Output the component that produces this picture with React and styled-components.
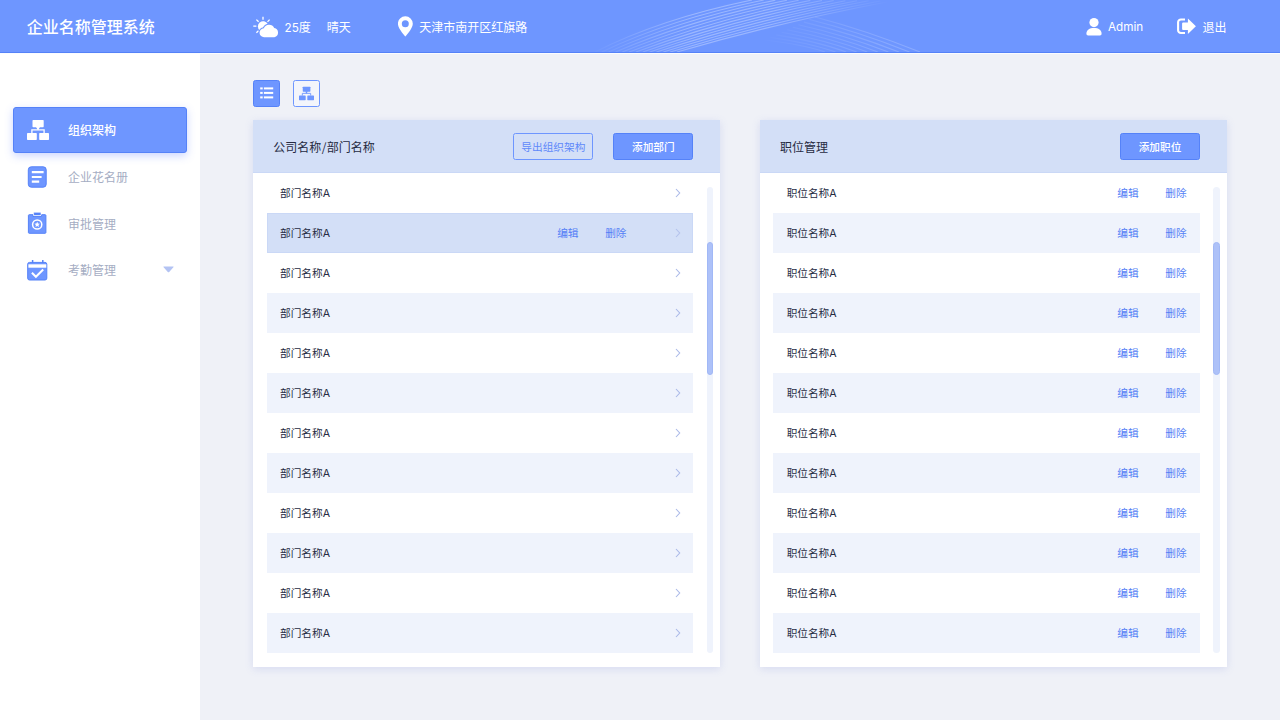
import React from 'react';
import styled, { createGlobalStyle, css } from 'styled-components';

const blue = '#6e96ff';
const deep = '#5582f8';

const GlobalStyle = createGlobalStyle`
  * { box-sizing: border-box; }
  body {
    margin: 0;
    background: #eff1f7;
    font-family: "Noto Sans CJK SC", "Noto Sans", sans-serif;
    color: #262b42;
  }
  button { font-family: inherit; }
`;

const Page = styled.div`
  width: 1280px;
  height: 720px;
  display: flex;
  flex-direction: column;
  overflow: hidden;
`;

const Header = styled.header`
  position: relative;
  flex: none;
  height: 53px;
  display: flex;
  align-items: center;
  padding-top: 2px;
  background: ${blue};
  border-bottom: 1px solid ${deep};
  box-shadow: 0 1px 0 #fbfcff;
  color: #fff;
  font-size: 12px;
  line-height: 18px;
  z-index: 1;
`;

const Waves = styled.svg`
  position: absolute;
  left: 590px;
  top: 0;
`;

const Title = styled.h1`
  margin: 0 0 2px;
  padding-left: 26.7px;
  width: 252.5px;
  font-size: 16px;
  line-height: 24px;
  font-weight: 500;
`;

const HeaderItem = styled.div`
  display: flex;
  align-items: center;
  width: ${(p) => p.$width}px;
  gap: ${(p) => p.$gap}px;
  white-space: nowrap;

  svg {
    margin-bottom: 1px;
  }
`;

const Spacer = styled.div`
  flex: 1;
`;

const Body = styled.div`
  flex: 1;
  display: flex;
`;

const Sidebar = styled.nav`
  flex: none;
  width: 200px;
  padding: 53.67px 13.33px 0;
  background: #fff;
`;

const NavItem = styled.a`
  display: flex;
  align-items: center;
  height: 46.67px;
  padding: 0 12.5px 0 13.3px;
  border-radius: 3px;
  font-size: 12px;
  color: #a5adc3;
  ${(p) =>
    p.$active &&
    css`
      background: ${blue};
      border: 1px solid ${deep};
      padding: 0 11.5px 0 12.3px;
      color: #fff;
      font-weight: 500;
      box-shadow: 0 3px 8px rgba(85, 120, 255, 0.3);
    `}
`;

const NavIcon = styled.span`
  display: flex;
  width: 41.4px;
`;

const NavLabel = styled.span`
  flex: 1;
`;

const Main = styled.main`
  flex: 1;
  padding: 27px 53.33px 0;
`;

const Toggles = styled.div`
  display: flex;
  gap: 13.33px;
  margin-bottom: 13.33px;
`;

const Toggle = styled.button`
  display: flex;
  align-items: center;
  justify-content: center;
  width: 26.67px;
  height: 26.67px;
  padding: 0;
  border: 1px solid ${(p) => (p.$active ? deep : blue)};
  border-radius: 2.5px;
  background: ${(p) => (p.$active ? blue : '#f3f5fb')};
`;

const Panels = styled.div`
  display: flex;
  gap: 40px;
`;

const Panel = styled.section`
  width: 466.67px;
  height: 546.67px;
  background: #fff;
  box-shadow: 0 2px 8px rgba(120, 135, 220, 0.2);
`;

const PanelHead = styled.div`
  display: flex;
  align-items: center;
  gap: 20px;
  height: 53.33px;
  padding: 0 26.67px 0 20px;
  background: #d3dff7;
  box-shadow: inset 0 -1px 0 #cad8f6;
`;

const PanelTitle = styled.h2`
  flex: 1;
  margin: 0;
  font-size: 12px;
  font-weight: 400;
`;

const Button = styled.button`
  width: 80px;
  height: 26.67px;
  padding: 1px 0 0;
  border: 1px solid ${(p) => (p.$outline ? blue : deep)};
  border-radius: 2.5px;
  background: ${(p) => (p.$outline ? 'transparent' : blue)};
  color: ${(p) => (p.$outline ? '#5f89fa' : '#fff')};
  font-size: 10.67px;
  line-height: 16px;
  font-weight: ${(p) => (p.$outline ? 400 : 500)};
  white-space: nowrap;
`;

const PanelBody = styled.div`
  display: flex;
  gap: 13.33px;
  padding: 0 6.67px 0 13.33px;
`;

const List = styled.ul`
  width: 426.67px;
  margin: 0;
  padding: 0;
  list-style: none;
`;

const rowColors = { plain: '#fff', stripe: '#eff3fc', active: '#d3dff7' };

const Row = styled.li`
  display: flex;
  align-items: center;
  height: 40px;
  padding: 0 13.33px;
  background: ${(p) => rowColors[p.$tone]};
  box-shadow: ${(p) => (p.$tone === 'active' ? 'inset 0 0 0 1px #cad8f6' : 'none')};
  font-size: 10.67px;
  line-height: 16px;
`;

const RowName = styled.span`
  flex: 1;
`;

const Latin = styled.span`
  font-family: Inter, sans-serif;
`;

const HeaderLatin = styled(Latin)`
  font-size: 11.7px;
`;

const Slash = styled.span`
  margin: 0 0.4px;
`;

const Actions = styled.span`
  display: flex;
  gap: 26.67px;
  margin-right: ${(p) => p.$end}px;
  color: #5480f6;
`;

const Track = styled.div`
  width: 6.67px;
  height: 466.67px;
  margin-top: 13.33px;
  padding-top: 55.33px;
  border-radius: 4px;
  background: #eff3fc;
`;

const Thumb = styled.div`
  height: 133.33px;
  border-radius: 4px;
  background: #adc1f8;
  border: 1px solid #a1b8f6;
`;

const Weather = () => (
  <svg width="26" height="22" viewBox="0 0 26 22" fill="none">
    <path
      d="M10 0.8v3M3.4 3.6l2.2 2.2M16.6 3.6l-2.1 2.3M.3 10.2h3.1M3.4 16.8l2.1-2.1"
      stroke="#fff"
      strokeWidth="1.3"
    />
    <path d="M6.9 14.5A5.2 5.2 0 1 1 14.7 8" fill="#fff" />
    <path
      d="M11.3 21.2a4.5 4.5 0 0 1-.5-9 5.7 5.7 0 0 1 10.4-.2 4.7 4.7 0 0 1 .2 9.2Z"
      fill="#fff"
      stroke={blue}
      strokeWidth="2"
      paintOrder="stroke"
    />
  </svg>
);

const Pin = () => (
  <svg width="16" height="21" viewBox="0 0 16 21">
    <path
      d="M7.3.3A7.4 7.4 0 0 0-.1 7.700C-.1 12.500 7.300 20.500 7.300 20.500s7.500-8 7.500-12.800A7.400 7.400 0 0 0 7.300.300Zm0 3.900a3.500 3.500 0 1 1 0 7 3.500 3.500 0 0 1 0-7Z"
      fill="#fff"
      fillRule="evenodd"
    />
  </svg>
);

const User = () => (
  <svg width="16" height="18" viewBox="0 0 16 18" fill="#fff">
    <circle cx="8" cy="4.6" r="4.6" />
    <path d="M.4 15.6C.5 11.8 3.4 9.9 8 9.9s7.5 1.9 7.6 5.7c0 1.3-.6 1.8-1.7 1.8H2.1C1 17.4.4 16.900.4 15.600Z" />
  </svg>
);

const Exit = () => (
  <svg width="20" height="17" viewBox="0 0 20 17" fill="none">
    <path d="M9 1.500H5a2.800 2.800 0 0 0-2.900 2.800v7.900A2.800 2.800 0 0 0 5 15h4" stroke="#fff" strokeWidth="2.100" />
    <path d="M11.900.500v3.900H7.100a1 1 0 0 0-1 1v5.700a1 1 0 0 0 1 1h4.800v3.900L19.900 8.300Z" fill="#fff" />
  </svg>
);

const OrgChart = ({ size, color }) => (
  <svg width={size} height={size} viewBox="0 0 22 22" fill={color}>
    <rect x="5.5" y="1" width="11.2" height="7.3" rx=".7" />
    <rect x="0" y="14" width="9.8" height="7" rx=".7" />
    <rect x="12.2" y="14" width="9.8" height="7" rx=".7" />
    <path d="M11 8v3M4.9 14v-3.2h12.2V14" fill="none" stroke={color} strokeWidth="1.3" />
    <path d="M9 8h4l-1.2 2h-1.6Z" />
  </svg>
);

const Roster = () => (
  <svg width="21" height="22" viewBox="0 0 21 22">
    <rect x="1.3" y=".8" width="17.9" height="20.4" rx="3" fill={blue} stroke={deep} />
    <path d="M4.8 6.2h11.8M4.8 11h9.8M4.8 15.6h7.4" stroke="#fff" strokeWidth="2.2" />
  </svg>
);

const Approval = () => (
  <svg width="21" height="22" viewBox="0 0 21 22">
    <path
      d="M2.2 2.7H6v1.8h8.5V2.7h3.6c.5 0 .8.3.8.8v17c0 .5-.3.8-.8.8H2.2c-.5 0-.8-.3-.8-.8v-17c0-.5.3-.8.8-.8Z"
      fill={blue}
      stroke={deep}
    />
    <rect x="6.6" y=".3" width="7.4" height="3.3" rx=".8" fill={deep} stroke="#fff" strokeWidth=".6" />
    <circle cx="10.2" cy="12.5" r="4.6" fill="none" stroke="#fff" strokeWidth="1.5" />
    <path
      d="m10.2 9.8.8 1.8 1.9.2-1.4 1.3.4 1.9-1.7-1-1.7 1 .4-1.9-1.4-1.3 1.9-.2Z"
      fill="#fff"
    />
  </svg>
);

const Attendance = () => (
  <svg width="21" height="22" viewBox="0 0 21 22">
    <path d="M5.6 1v4M15.8 1v4" stroke={deep} strokeWidth="1.5" />
    <rect x=".7" y="3.4" width="19.1" height="17.6" rx="1.8" fill={blue} stroke={deep} />
    <path d="M1.4 5.3h17.9v3.4H1.4Z" fill="#fff" />
    <path d="m4.9 13.8 4 4 7.3-7.3" fill="none" stroke="#fff" strokeWidth="2" />
  </svg>
);

const Caret = () => (
  <svg width="11" height="7" viewBox="0 0 11 7">
    <path d="M.9.6h9.2c.5 0 .6.4.3.7L6.2 5.9a1 1 0 0 1-1.4 0L.6 1.3C.3 1 .4.6.9.6Z" fill="#b3c3f3" />
  </svg>
);

const ListIcon = () => (
  <svg width="14" height="12" viewBox="0 0 14 12" fill="#fff">
    <rect x=".2" y=".4" width="2.5" height="2" />
    <rect x="3.9" y=".4" width="9.3" height="2" />
    <rect x=".2" y="4.9" width="2.5" height="2" />
    <rect x="3.9" y="4.9" width="9.3" height="2" />
    <rect x=".2" y="9.4" width="2.5" height="2" />
    <rect x="3.9" y="9.4" width="9.3" height="2" />
  </svg>
);

const ChevronMark = styled.svg`
  flex: none;
  margin-right: -0.7px;
`;

const Chevron = ({ faint }) => (
  <ChevronMark width="6" height="10" viewBox="0 0 6 10">
    <path d="m1 1 3.7 4L1 9" fill="none" stroke={faint ? '#b3c2ec' : '#a9b8e8'} strokeWidth="1.1" />
  </ChevronMark>
);

const steps = (count) => Array.from({ length: count }, (_, i) => i / (count - 1));

const risePath = (t) =>
  `M${5 + 82 * t} 52Q${70 + 120 * t} ${19 + 3 * t} ${162 + 140 * t} ${1 * t}`;

const fallPath = (t) =>
  `M${225 - 50 * t} ${17 + 23 * t}Q${275 - 60 * t} ${30 + 15 * t} ${330 - 95 * t} 52`;

const WaveLines = () => (
  <Waves width="350" height="52" viewBox="0 0 350 52" fill="none">
    <defs>
      <linearGradient id="rise" gradientUnits="userSpaceOnUse" x1="0" y1="0" x2="300" y2="0">
        <stop offset="0" stopColor="#fff" stopOpacity="0" />
        <stop offset=".35" stopColor="#fff" stopOpacity=".32" />
        <stop offset=".6" stopColor="#fff" stopOpacity=".3" />
        <stop offset="1" stopColor="#fff" stopOpacity="0" />
      </linearGradient>
      <linearGradient id="fall" gradientUnits="userSpaceOnUse" x1="170" y1="0" x2="330" y2="0">
        <stop offset="0" stopColor="#fff" stopOpacity="0" />
        <stop offset=".75" stopColor="#fff" stopOpacity=".17" />
        <stop offset="1" stopColor="#fff" stopOpacity=".2" />
      </linearGradient>
    </defs>
    {steps(13).map((t) => (
      <path key={t} d={risePath(t)} stroke="url(#rise)" strokeWidth="1.1" />
    ))}
    {steps(10).map((t) => (
      <path key={t} d={fallPath(t)} stroke="url(#fall)" strokeWidth="1.1" />
    ))}
  </Waves>
);

const nav = [
  { label: '组织架构', icon: <OrgChart size={22} color="#fff" />, active: true },
  { label: '企业花名册', icon: <Roster /> },
  { label: '审批管理', icon: <Approval /> },
  { label: '考勤管理', icon: <Attendance />, more: true },
];

const rows = Array.from({ length: 12 }, (_, i) => i);

const RowActions = ({ end }) => (
  <Actions $end={end}>
    <span>编辑</span>
    <span>删除</span>
  </Actions>
);

const ScrollBar = () => (
  <Track>
    <Thumb />
  </Track>
);

export default function App() {
  return (
    <>
      <GlobalStyle />
      <Page>
        <Header>
          <WaveLines />
          <Title>企业名称管理系统</Title>
          <HeaderItem $width={145} $gap={6}>
            <Weather />
            <HeaderItem $gap={16}>
              <span>
                <HeaderLatin>25</HeaderLatin>度
              </span>
              <span>晴天</span>
            </HeaderItem>
          </HeaderItem>
          <HeaderItem $gap={5.8}>
            <Pin />
            <span>天津市南开区红旗路</span>
          </HeaderItem>
          <Spacer />
          <HeaderItem $width={90} $gap={6}>
            <User />
            <HeaderLatin>Admin</HeaderLatin>
          </HeaderItem>
          <HeaderItem $width={104} $gap={6.5}>
            <Exit />
            <span>退出</span>
          </HeaderItem>
        </Header>
        <Body>
          <Sidebar>
            {nav.map((item) => (
              <NavItem key={item.label} $active={item.active}>
                <NavIcon>{item.icon}</NavIcon>
                <NavLabel>{item.label}</NavLabel>
                {item.more && <Caret />}
              </NavItem>
            ))}
          </Sidebar>
          <Main>
            <Toggles>
              <Toggle $active aria-label="list">
                <ListIcon />
              </Toggle>
              <Toggle aria-label="tree">
                <OrgChart size={15} color={blue} />
              </Toggle>
            </Toggles>
            <Panels>
              <Panel>
                <PanelHead>
                  <PanelTitle>
                    公司名称<Slash>/</Slash>部门名称
                  </PanelTitle>
                  <Button $outline>导出组织架构</Button>
                  <Button>添加部门</Button>
                </PanelHead>
                <PanelBody>
                  <List>
                    {rows.map((i) => (
                      <Row key={i} $tone={i === 1 ? 'active' : i % 2 ? 'stripe' : 'plain'}>
                        <RowName>
                          部门名称<Latin>A</Latin>
                        </RowName>
                        {i === 1 && <RowActions end={48.2} />}
                        <Chevron faint={i === 1} />
                      </Row>
                    ))}
                  </List>
                  <ScrollBar />
                </PanelBody>
              </Panel>
              <Panel>
                <PanelHead>
                  <PanelTitle>职位管理</PanelTitle>
                  <Button>添加职位</Button>
                </PanelHead>
                <PanelBody>
                  <List>
                    {rows.map((i) => (
                      <Row key={i} $tone={i % 2 ? 'stripe' : 'plain'}>
                        <RowName>
                          职位名称<Latin>A</Latin>
                        </RowName>
                        <RowActions end={0} />
                      </Row>
                    ))}
                  </List>
                  <ScrollBar />
                </PanelBody>
              </Panel>
            </Panels>
          </Main>
        </Body>
      </Page>
    </>
  );
}
